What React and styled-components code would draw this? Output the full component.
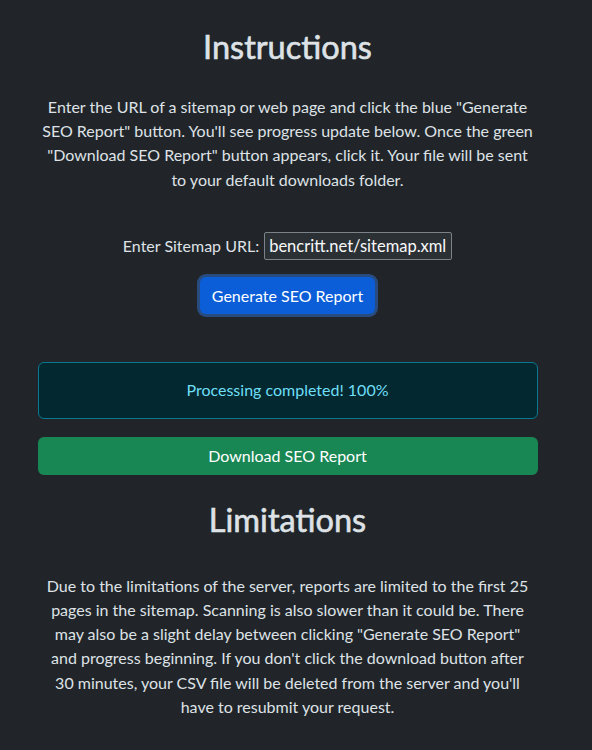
import React from "react";
import styled, { createGlobalStyle } from "styled-components";

const GlobalStyle = createGlobalStyle`
  body {
    margin: 0;
    background: #212529;
    color: #dee2e6;
    font-family: "Lato", "Noto Sans", sans-serif;
    font-size: 16px;
    line-height: 1.5;
  }
`;

const Page = styled.div`
  width: 575px;
  padding-top: 28px;
  padding-bottom: 24px;
`;

const Container = styled.main`
  width: 500px;
  margin: 0 auto;
  display: flex;
  flex-direction: column;
  align-items: stretch;
  text-align: center;
`;

const Heading = styled.h1`
  margin: ${p => p.$top || 0}px 0 0;
  font-size: 32.5px;
  font-weight: 400;
  -webkit-text-stroke: 0.6px currentColor;
  line-height: 38px;
  color: #dee2e6;
`;

const Paragraph = styled.p`
  margin: ${p => p.$top}px 0 0;
  padding: 0 4px;
  line-height: 24.2px;
`;

const Form = styled.form`
  margin-top: 40px;
  display: flex;
  flex-direction: column;
  align-items: center;
`;

const FieldRow = styled.div`
  display: flex;
  align-items: center;
  gap: 5px;
`;

const Label = styled.label`
  font-size: 16px;
`;

const Input = styled.input`
  width: 188px;
  height: 28px;
  box-sizing: border-box;
  padding: 1px 4px;
  background: #2b3035;
  border: 1px solid #7b8288;
  border-radius: 2px;
  color: #f8f9fa;
  font-family: "Lato", "Noto Sans", sans-serif;
  font-size: 16.5px;
  outline: none;
`;

const Button = styled.button`
  box-sizing: border-box;
  border: none;
  border-radius: 6px;
  color: #fff;
  font-family: "Lato", "Noto Sans", sans-serif;
  font-size: 16px;
  cursor: pointer;
  background: ${p => (p.$green ? "#198754" : "#0b5ed7")};
  height: ${p => (p.$green ? "38px" : "37px")};
  width: ${p => (p.$green ? "100%" : "175px")};
  margin-top: ${p => (p.$green ? "18px" : "17px")};
  box-shadow: ${p => (p.$green ? "none" : "0 0 0 3px rgba(49, 110, 200, 0.55)")};
`;

const Alert = styled.div`
  margin-top: 48px;
  height: 57px;
  box-sizing: border-box;
  display: flex;
  align-items: center;
  justify-content: center;
  background: #032830;
  border: 1px solid #087990;
  border-radius: 6px;
  color: #6edff6;
`;

export default function App() {
  return (
    <>
      <GlobalStyle />
      <Page>
        <Container>
          <Heading>Instructions</Heading>
          <Paragraph $top={29}>
            Enter the URL of a sitemap or web page and click the blue "Generate SEO Report" button. You'll see progress update below. Once the green "Download SEO Report" button appears, click it. Your file will be sent to your default downloads folder.
          </Paragraph>
          <Form onSubmit={e => e.preventDefault()}>
            <FieldRow>
              <Label htmlFor="url">Enter Sitemap URL:</Label>
              <Input id="url" defaultValue="bencritt.net/sitemap.xml" />
            </FieldRow>
            <Button type="submit">Generate SEO Report</Button>
          </Form>
          <Alert>Processing completed! 100%</Alert>
          <Button type="button" $green>Download SEO Report</Button>
          <Heading $top={26}>Limitations</Heading>
          <Paragraph $top={35}>
            Due to the limitations of the server, reports are limited to the first 25 pages in the sitemap. Scanning is also slower than it could be. There may also be a slight delay between clicking "Generate SEO Report" and progress beginning. If you don't click the download button after 30 minutes, your CSV file will be deleted from the server and you'll have to resubmit your request.
          </Paragraph>
        </Container>
      </Page>
    </>
  );
}
